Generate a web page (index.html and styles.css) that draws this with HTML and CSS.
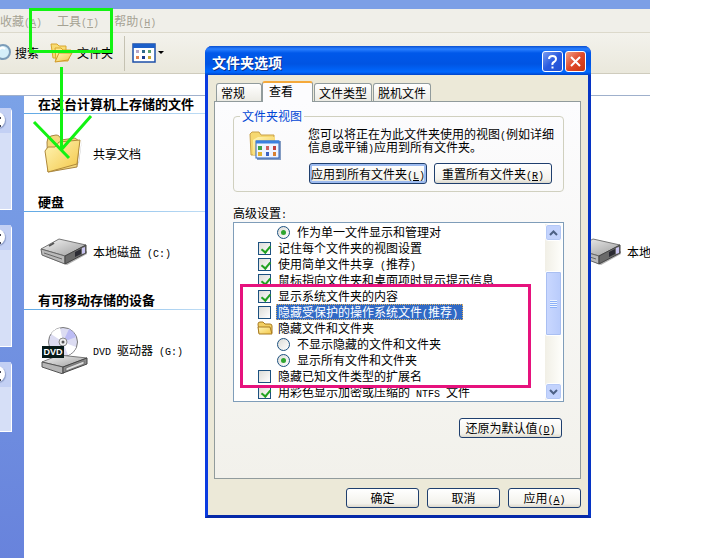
FILE: index.html
```html
<!DOCTYPE html>
<html lang="zh-CN">
<head>
  <meta charset="UTF-8" />
  <meta name="viewport" content="width=device-width, initial-scale=1.0" />
  <title>文件夹选项</title>
  <link rel="stylesheet" href="styles.css">
</head>
<body>
  <!-- shared icons -->
  <svg class="defs" width="0" height="0">
    <defs>
      <linearGradient id="gold" x1="0" y1="0" x2="1" y2="1">
        <stop offset="0" stop-color="#fff6b8" />
        <stop offset="1" stop-color="#f3c646" />
      </linearGradient>
      <linearGradient id="steel" x1="0" y1="0" x2="1" y2="1">
        <stop offset="0" stop-color="#f4f4f4" />
        <stop offset="1" stop-color="#9c9c9c" />
      </linearGradient>
      <symbol id="drive" viewBox="0 0 48 28">
        <path d="M3 18l24 9 20-11v-3L27 23z" fill="#555" opacity=".45" />
        <path d="M1 11L19 1l27 6-21 11z" fill="url(#steel)" stroke="#777" />
        <path d="M1 11l24 7v8L2 17z" fill="#b9b9b9" stroke="#666" />
        <path d="M25 18L46 7v8L25 26z" fill="#6a6a6a" stroke="#444" />
        <path d="M35 14l6-3v5l-6 3z" fill="#2b2b33" />
        <path d="M42 10l3-1v6l-3 1z" fill="#c9c4f0" />
        <path d="M4 15l18 6" stroke="#666" />
        <path d="M9 8l5-3" stroke="#555" stroke-width="2" />
      </symbol>
    </defs>
  </svg>

  <div class="explorer">
    <div class="titlestrip"></div>
    <div class="menubar">
      <button>收藏<span class="en">(<u>A</u>)</span></button>
      <button>工具<span class="en">(<u>T</u>)</span></button>
      <button>帮助<span class="en">(<u>H</u>)</span></button>
    </div>
    <div class="toolbar">
      <button class="tool search">
        <svg width="12" height="20" viewBox="0 0 12 20"><circle cx="3" cy="9" r="7" fill="#d5effa" stroke="#7c9cb8" stroke-width="2" /><path d="M-1 7q3-4 6-1" stroke="#fff" stroke-width="2" fill="none" /></svg>
        <span>搜索</span>
      </button>
      <button class="tool folders">
        <svg width="23" height="22" viewBox="0 0 23 22">
          <path d="M1 2h6l2 2h7v12H3z" fill="#f8dc72" stroke="#d9a62e" />
          <path d="M5 6h6l2 2h8v2l-3 9H6z" fill="#ffe98c" stroke="#d9a62e" />
          <path d="M5 20l4-9h13l-4 7z" fill="url(#gold)" stroke="#d09a28" />
        </svg>
        <span>文件夹</span>
      </button>
      <button class="tool views" aria-label="查看">
        <svg width="32" height="20" viewBox="0 0 32 20">
          <rect x="1" y="1" width="22" height="18" fill="#fff" stroke="#1c4fa8" stroke-width="1.5" />
          <rect x="1" y="1" width="22" height="4" fill="#1c5fc8" />
          <g><rect x="4" y="7" width="3" height="3" fill="#b7a6c8" /><rect x="10" y="7" width="3" height="3" fill="#2f6d8c" /><rect x="16" y="7" width="3" height="3" fill="#58a070" /><rect x="4" y="13" width="3" height="3" fill="#e08050" /><rect x="10" y="13" width="3" height="3" fill="#173b8c" /><rect x="16" y="13" width="3" height="3" fill="#c8a838" /></g>
          <path d="M26 8h6l-3 3z" fill="#000" />
        </svg>
      </button>
    </div>
    <div class="addressbar"></div>

    <div class="workarea">
      <div class="sidebar">
        <div class="card"><div class="card-head"><i></i></div></div>
        <div class="card tall"><div class="card-head"><i></i></div></div>
        <div class="card short"><div class="card-head"><i></i></div></div>
      </div>
      <div class="content">
        <h2>在这台计算机上存储的文件</h2>
        <div class="tiles">
          <div class="tile">
            <svg width="48" height="44" viewBox="0 0 48 44">
              <path d="M8 41l30-8 4-26-3 24z" fill="#777" opacity=".5" />
              <path d="M7 10q0-5 4-6l5-1q4 0 5 5l14-2 4 3-2 26L8 40z" fill="#f3d77c" stroke="#a88543" />
              <path d="M5 19l3-4h7l4-5 21-2-3 24L8 40z" fill="url(#gold)" stroke="#b08a3a" />
            </svg>
            <span>共享文档</span>
          </div>
        </div>
        <h2>硬盘</h2>
        <div class="tiles">
          <div class="tile"><svg width="48" height="28"><use href="#drive" /></svg><span>本地磁盘<span class="en"> (C:)</span></span></div>
          <div class="tile"><svg width="48" height="28"><use href="#drive" /></svg><span>本地</span></div>
        </div>
        <h2>有可移动存储的设备</h2>
        <div class="tiles">
          <div class="tile">
            <svg width="48" height="48" viewBox="0 0 48 48">
              <circle cx="23" cy="16" r="14.500" fill="#dcdcf2" stroke="#777" />
              <path d="M23 16L11 8a14 14 0 0 1 9-6z" fill="#fff" />
              <path d="M23 16l13 5a14 14 0 0 1-8 8z" fill="#fff" />
              <path d="M23 16l6-13a14 14 0 0 1 7 8z" fill="#bcbcf4" />
              <circle cx="23" cy="16" r="4" fill="#eee" stroke="#888" />
              <circle cx="23" cy="16" r="1.500" fill="#555" />
              <path d="M2 36l17-7 28 3-24 9z" fill="url(#steel)" stroke="#777" />
              <path d="M2 36l21 5v7L2 41z" fill="#b5b5b5" stroke="#555" />
              <path d="M23 41l24-9v6l-24 9z" fill="#8a8a8a" stroke="#444" />
              <path d="M26 42l18-7v3l-18 7z" fill="#ddd" stroke="#555" stroke-width=".6" />
              <rect x="2" y="20" width="22" height="12" fill="#071a18" />
              <text x="13" y="29" text-anchor="middle" class="dvd">DVD</text>
            </svg>
            <span><span class="en">DVD </span>驱动器<span class="en"> (G:)</span></span>
          </div>
        </div>
      </div>
    </div>
  </div>

  <div class="dialog" role="dialog" aria-labelledby="dlg-title">
    <div class="dialog-title">
      <h1 id="dlg-title">文件夹选项</h1>
      <button class="cap help" aria-label="帮助"><svg width="19" height="19" viewBox="0 0 19 19"><path d="M6 7q0-3 3.500-3T13 7q0 2-2 3t-1.500 3M9.500 14.500v2" fill="none" stroke="#fff" stroke-width="2" /></svg></button>
      <button class="cap close" aria-label="关闭"><svg width="19" height="19" viewBox="0 0 19 19"><path d="M5 5l9 9M14 5l-9 9" stroke="#fff" stroke-width="2" /></svg></button>
    </div>
    <div class="dialog-body">
      <div class="tabs" role="tablist">
        <button role="tab">常规</button>
        <button role="tab" class="active" aria-selected="true">查看</button>
        <button role="tab">文件类型</button>
        <button role="tab">脱机文件</button>
      </div>
      <div class="panel">
        <fieldset>
          <legend>文件夹视图</legend>
          <svg class="view-icon" width="32" height="30" viewBox="0 0 32 30">
            <path d="M1 3l2-2h7l2 3h13v20H2z" fill="#f6d870" stroke="#c8a048" />
            <path d="M4 24V9l5-3h17v18z" fill="url(#gold)" />
            <rect x="8" y="10" width="24" height="19" fill="#355e9c" opacity=".6" />
            <rect x="7" y="10" width="23" height="17" fill="#eef4ff" stroke="#2c62b8" />
            <path d="M7 11h23" stroke="#3a80e0" stroke-width="3" />
            <g><rect x="9" y="15" width="4" height="4" fill="#3fa34a" /><rect x="17" y="15" width="3" height="4" fill="#d06060" /><rect x="24" y="15" width="3" height="4" fill="#c04040" /><rect x="9" y="21" width="4" height="4" fill="#e0b030" /><rect x="17" y="21" width="3" height="4" fill="#3b62c0" /><rect x="24" y="21" width="3" height="4" fill="#d88030" /></g>
          </svg>
          <div class="view-text">
            <p>您可以将正在为此文件夹使用的视图<span class="en">(</span>例如详细<br>信息或平铺<span class="en">)</span>应用到所有文件夹。</p>
            <div class="view-buttons">
              <button class="btn default">应用到所有文件夹<span class="en">(<u>L</u>)</span></button>
              <button class="btn">重置所有文件夹<span class="en">(<u>R</u>)</span></button>
            </div>
          </div>
        </fieldset>

        <div class="list-label" id="adv">高级设置<span class="en">:</span></div>
        <div class="list" aria-labelledby="adv">
          <div class="rows">
            <label class="row sub"><input type="radio" name="manage" checked><span>作为单一文件显示和管理对</span></label>
            <label class="row"><input type="checkbox" checked><span>记住每个文件夹的视图设置</span></label>
            <label class="row"><input type="checkbox" checked><span>使用简单文件共享<span class="en"> (</span>推荐<span class="en">)</span></span></label>
            <label class="row"><input type="checkbox" checked><span>鼠标指向文件夹和桌面项时显示提示信息</span></label>
            <label class="row"><input type="checkbox" checked><span>显示系统文件夹的内容</span></label>
            <label class="row selected"><input type="checkbox"><span>隐藏受保护的操作系统文件<span class="en">(</span>推荐<span class="en">)</span></span></label>
            <div class="row group">
              <svg width="16" height="14" viewBox="0 0 16 14"><path d="M1 3q0-2 2-2h3l2 2h5q2 0 2 2v7H2z" fill="#f2cf62" stroke="#a87a20" /><path d="M1 6h12l2 7H2z" fill="url(#gold)" stroke="#a87a20" /></svg>
              <span>隐藏文件和文件夹</span>
            </div>
            <label class="row sub"><input type="radio" name="hidden"><span>不显示隐藏的文件和文件夹</span></label>
            <label class="row sub"><input type="radio" name="hidden" checked><span>显示所有文件和文件夹</span></label>
            <label class="row"><input type="checkbox"><span>隐藏已知文件类型的扩展名</span></label>
            <label class="row"><input type="checkbox" checked><span>用彩色显示加密或压缩的<span class="en"> NTFS </span>文件</span></label>
          </div>
          <div class="scrollbar">
            <button aria-label="向上"><svg width="9" height="6" viewBox="0 0 9 6"><path d="M1 5l3.500-3.500L8 5" /></svg></button>
            <div class="track"><div class="thumb"></div></div>
            <button aria-label="向下"><svg width="9" height="6" viewBox="0 0 9 6"><path d="M1 1l3.500 3.500L8 1" /></svg></button>
          </div>
        </div>
        <div class="restore"><button class="btn">还原为默认值<span class="en">(<u>D</u>)</span></button></div>
      </div>
      <div class="footer">
        <button class="btn">确定</button>
        <button class="btn">取消</button>
        <button class="btn">应用<span class="en">(<u>A</u>)</span></button>
      </div>
    </div>
  </div>

  <!-- hand-drawn marks on top of the windows -->
  <svg class="marks" width="540" height="400" fill="none">
    <rect x="30.500" y="9.500" width="81" height="42" stroke="#12f312" stroke-width="3" />
    <path d="M61.500 67v83M34 122l35 36M91 116l-30 34" stroke="#12f312" stroke-width="3" />
    <rect x="241.500" y="285.500" width="288" height="101" stroke="#e6127d" stroke-width="3" />
  </svg>
</body>
</html>
```

FILE: styles.css
```css
:root {
  --face: #ece9d8;
  --edge: #0a3be0;
  --btn-line: #1f3f6e;
}

* {
  box-sizing: border-box;
}

body {
  margin: 0;
  background: #fff;
  color: #000;
  font: 12px/12px "Noto Sans CJK SC", sans-serif;
}

button {
  font: inherit;
  color: inherit;
  padding: 0;
  border: 0;
  background: none;
  white-space: nowrap;
}

h1, h2, p {
  margin: 0;
}

svg {
  display: block;
  flex: none;
}

.defs, .marks {
  position: absolute;
  top: 0;
  left: 0;
  pointer-events: none;
}

/* half-width latin characters */
.en {
  font-family: "Liberation Mono", monospace;
  font-size: 10px;
  line-height: 0;
  white-space: pre;
}

/* explorer window */
.explorer {
  display: flex;
  flex-direction: column;
  min-height: 100vh;
  margin-right: 70px;
  overflow: hidden;
}

.titlestrip {
  height: 9px;
  background: #7c9fe6;
}

.menubar {
  display: flex;
  gap: 15px;
  height: 24px;
  background: #f0efe9;
  border-bottom: 1px solid #dcd9cb;
  color: #a5a293;
}

.toolbar {
  display: flex;
  align-items: center;
  height: 41px;
  background: linear-gradient(#f3f2ec, #eae8dc);
  border-bottom: 1px solid #cfccbd;
}

.tool {
  display: flex;
  align-items: center;
}
.search { gap: 3px; }
.folders { gap: 4px; margin-left: 11px; }
.views {
  height: 35px;
  margin-left: 11px;
  padding-left: 7px;
  border-left: 1px solid #c5c2b2;
}

.addressbar {
  height: 22px;
  border-bottom: 1px solid #9fb0cc;
}

.workarea {
  display: flex;
  flex: 1;
}

.sidebar {
  display: flex;
  flex-direction: column;
  gap: 15px;
  flex: none;
  width: 24px;
  padding: 12px 12px 0 0;
  background: linear-gradient(#7ba2e7, #6883dc);
}

.card {
  height: 102px;
  background: #d6dff7;
  border: 1px solid #fff;
  border-width: 0 1px 1px 0;
  border-top-right-radius: 4px;
}
.card.tall { height: 122px; }
.card.short { height: 70px; }

.card-head {
  height: 25px;
  padding-top: 4px;
  background: #c3d0f4;
  overflow: hidden;
}
.card-head i {
  display: block;
  width: 16px;
  height: 16px;
  margin-left: -11px;
  padding: 5px 0 0 10px;
  border-radius: 50%;
  background: #fff;
  box-shadow: 1px 1px 1px #8d9dc8;
}
.card-head i::after {
  content: "";
  display: block;
  width: 2px;
  height: 6px;
  border: 2px solid #445;
  border-width: 2px 0;
}

.content {
  flex: 1;
  min-width: 0;
}
.content h2 {
  height: 18px;
  padding-left: 14px;
  font-size: 13px;
  line-height: 15px;
  background: linear-gradient(90deg, #5fa8e4, #fff) bottom left / 300px 1px no-repeat;
}

.tiles {
  display: grid;
  grid-template-columns: 534px 100px;
  align-items: center;
  height: 80px;
  padding-left: 16px;
}
.tile {
  display: flex;
  align-items: center;
  gap: 5px;
}
.dvd {
  font: bold 9px "Liberation Sans", sans-serif;
  fill: #fff;
}

/* dialog */
.dialog {
  position: absolute;
  top: 46px;
  left: 205px;
  width: 386px;
  border: 3px solid var(--edge);
  border-top: 0;
  border-bottom-color: #0529a8;
  border-right-color: #0634c4;
  border-radius: 7px 7px 0 0;
  background: var(--edge);
}

.dialog-title {
  display: flex;
  align-items: center;
  gap: 2px;
  height: 29px;
  margin: 0 -3px;
  padding: 2px 5px 0 7px;
  border-radius: 7px 7px 0 0;
  background: linear-gradient(#0a4fd0, #2a80ff 3px, #0058ea 7px, #0054e3 18px, #0068ff 26px, #0043c8);
}
.dialog-title h1 {
  flex: 1;
  font-size: 14px;
  line-height: 12px;
  color: #fff;
  text-shadow: 1px 1px 0 #0b2f8c;
}

.cap {
  width: 21px;
  height: 21px;
  border: 1px solid #fff;
  border-radius: 3px;
}
.help { background: linear-gradient(135deg, #7a9cf0, #2a5be0 50%, #2450d0); }
.close { background: linear-gradient(135deg, #f0a088, #e0492a 50%, #c8350f); }

.dialog-body {
  padding: 6px 7px 7px 6px;
  background: var(--face);
}

.tabs {
  display: flex;
  align-items: flex-end;
  gap: 1px;
  padding-left: 2px;
}
.tabs button {
  height: 18px;
  padding: 0 4px;
  border: 1px solid #919b9c;
  border-bottom: 0;
  border-radius: 3px 3px 0 0;
  background: linear-gradient(#fff, #ecebe4);
}
.tabs button:first-child {
  padding-right: 16px;
}
.tabs .active {
  position: relative;
  height: 21px;
  margin: 0 0 -1px -1px;
  padding: 0 19px 4px 6px;
  border-top: 2px solid #f5a93b;
  background: #fcfcfe;
}

.panel {
  min-height: 378px;
  padding: 8px 16px 0 18px;
  border: 1px solid #919b9c;
  background: linear-gradient(#fcfcfe, #f2f1eb);
}

fieldset {
  display: flex;
  gap: 27px;
  margin: 0;
  padding: 5px 8px 7px 15px;
  border: 1px solid #d0d0bf;
  border-radius: 4px;
}
legend {
  margin-left: -9px;
  padding: 0 2px;
  color: #0046d5;
}
.view-icon {
  margin-top: 4px;
}
.view-buttons {
  display: flex;
  gap: 7px;
  margin-top: 10px;
  padding-left: 1px;
}
.view-buttons .btn {
  width: 118px;
  height: 21px;
}
.view-text p {
  line-height: 13px;
  white-space: nowrap;
}

.btn {
  width: 73px;
  height: 20px;
  border: 1px solid var(--btn-line);
  border-radius: 3px;
  background: linear-gradient(#fff, #f3f2ec 80%, #dcd8cc);
}
.btn.default {
  box-shadow: inset 0 0 0 2px #9dbbf0;
}

.list-label {
  margin-top: 15px;
}

.list {
  display: flex;
  height: 180px;
  margin-top: 3px;
  padding: 1px;
  border: 1px solid #7f9db9;
  background: #fff;
}
.rows {
  flex: 1;
  min-width: 0;
}
.row {
  display: flex;
  align-items: center;
  gap: 5px;
  height: 16px;
  padding-left: 23px;
}
.row > span {
  padding: 2px;
  white-space: nowrap;
}
.row.sub { padding-left: 42px; }
.row.group { padding-left: 22px; gap: 3px; }
.row.selected > span {
  padding: 1px 4px 1px 1px;
  border: 1px dotted #e0b060;
  background: #316ac5;
  color: #fff;
}

.row input {
  appearance: none;
  flex: none;
  width: 13px;
  height: 13px;
  margin: 0;
  border: 1px solid #1c5180;
  background: linear-gradient(135deg, #dcdcd7, #fff);
}
.row input[type="radio"] {
  border-radius: 50%;
}
.row input[type="checkbox"]:checked::after {
  content: "";
  display: block;
  width: 4px;
  height: 7px;
  margin: 1px 0 0 4px;
  border: solid #21a121;
  border-width: 0 2px 2px 0;
  transform: rotate(40deg);
}
.row input[type="radio"]:checked::after {
  content: "";
  display: block;
  width: 5px;
  height: 5px;
  margin: 3px;
  border-radius: 50%;
  background: #2fa52f;
}

.scrollbar {
  display: flex;
  flex-direction: column;
  width: 17px;
  background: linear-gradient(90deg, #f1efe6, #fefefb);
}
.scrollbar button {
  display: grid;
  place-items: center;
  height: 17px;
  border: 1px solid #fff;
  border-radius: 3px;
  background: #c3d3fd;
  box-shadow: inset 0 0 0 1px #b4c8f6;
}
.scrollbar path {
  fill: none;
  stroke: #4d6185;
  stroke-width: 2;
}
.track {
  flex: 1;
  padding-top: 30px;
}
.thumb {
  height: 65px;
  padding-top: 28px;
  border: 1px solid #fff;
  border-radius: 2px;
  background: linear-gradient(90deg, #cad8ff, #b8cbfb);
  box-shadow: inset 0 0 0 1px #a9bff2;
}
.thumb::after {
  content: "";
  display: block;
  width: 7px;
  height: 8px;
  margin: 0 auto;
  background: repeating-linear-gradient(#eef4fe 0 1px, #8cb0f8 1px 2px);
}

.restore {
  display: flex;
  justify-content: flex-end;
  margin-top: 16px;
  padding-right: 2px;
}
.restore .btn {
  width: 103px;
}

.footer {
  display: flex;
  justify-content: flex-end;
  gap: 8px;
  margin-top: 9px;
}
```
